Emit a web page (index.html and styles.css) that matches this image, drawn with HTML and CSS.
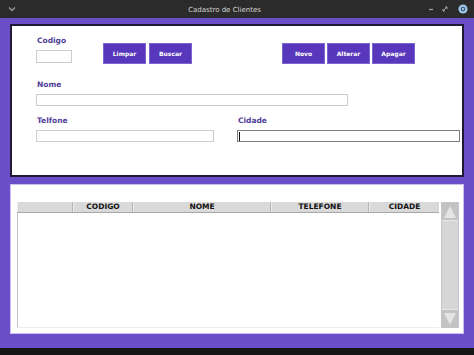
FILE: index.html
```html
<!DOCTYPE html>
<html lang="pt">
<head>
<meta charset="utf-8">
<title>Cadastro de Clientes</title>
<link rel="stylesheet" href="styles.css">
</head>
<body>
<div class="window">
  <header class="titlebar">
    <span class="tb-left">
      <svg width="8" height="6" viewBox="0 0 8 6"><path d="M1 1.5 L4 4.5 L7 1.5" fill="none" stroke="#9a9a9a" stroke-width="1.4"/></svg>
    </span>
    <span class="tb-title">Cadastro de Clientes</span>
    <span class="tb-right">
      <svg class="tb-icon" width="8" height="8" viewBox="0 0 8 8"><path d="M2 4.5 H6" stroke="#a8a8a8" stroke-width="1.2"/></svg>
      <svg class="tb-icon" width="8" height="8" viewBox="0 0 8 8"><path d="M2 6 L6 2 M4 2 H6 V4 M2 4 V6 H4" fill="none" stroke="#a8a8a8" stroke-width="1"/></svg>
      <svg class="tb-close" width="10" height="10" viewBox="0 0 10 10"><circle cx="5" cy="5" r="4.6" fill="#9fc2e8"/><circle cx="5" cy="5" r="2.2" fill="#3a4d66"/><circle cx="5" cy="5" r="1.2" fill="#9fc2e8"/></svg>
    </span>
  </header>
  <main class="content">
    <section class="form-panel">
      <div class="row-top">
        <div class="field">
          <label class="lbl">Codigo</label>
          <div class="input in-codigo"></div>
        </div>
        <div class="btn-group g1">
          <button class="btn">Limpar</button>
          <button class="btn">Buscar</button>
        </div>
        <div class="btn-group g2">
          <button class="btn">Novo</button>
          <button class="btn">Alterar</button>
          <button class="btn">Apagar</button>
        </div>
      </div>
      <div class="field field-nome">
        <label class="lbl">Nome</label>
        <div class="input in-nome"></div>
      </div>
      <div class="row-bottom">
        <div class="field">
          <label class="lbl">Telfone</label>
          <div class="input in-tel"></div>
        </div>
        <div class="field">
          <label class="lbl">Cidade</label>
          <div class="input in-cidade focused"><span class="caret"></span></div>
        </div>
      </div>
    </section>
    <section class="table-panel">
      <div class="table">
        <div class="thead">
          <div class="th"></div>
          <div class="th">CODIGO</div>
          <div class="th">NOME</div>
          <div class="th">TELEFONE</div>
          <div class="th">CIDADE</div>
        </div>
        <div class="tbody"></div>
      </div>
      <div class="scrollbar">
        <div class="sb-btn"><svg width="16" height="16" viewBox="0 0 16 16"><polygon points="8,2 14,14 2,14" fill="#e4e4e4"/></svg></div>
        <div class="sb-track"></div>
        <div class="sb-btn"><svg width="16" height="16" viewBox="0 0 16 16"><polygon points="2,2 14,2 8,14" fill="#e4e4e4"/></svg></div>
      </div>
    </section>
  </main>
  <footer class="bottom-bar"></footer>
</div>
</body>
</html>
```
FILE: styles.css
```css
* { box-sizing: border-box; }
html, body { margin: 0; padding: 0; }
body {
  width: 474px;
  height: 355px;
  overflow: hidden;
  font-family: "DejaVu Sans", sans-serif;
  background: #6a4fc8;
}
.window {
  display: flex;
  flex-direction: column;
  width: 474px;
  height: 355px;
}
.titlebar {
  height: 18px;
  background: #2b2b2b;
  display: flex;
  align-items: center;
  position: relative;
  padding: 0 6px 0 8px;
}
.tb-left { display: flex; width: 8px; }
.tb-title {
  flex: 1;
  text-align: center;
  color: #d4d4d4;
  font-size: 7px;
  padding-top: 1px;
  padding-left: 6px;
}
.tb-right {
  display: flex;
  align-items: center;
  gap: 6px;
}
.tb-close { margin-left: 3px; }
.content {
  flex: 1;
  padding: 6px 10px 14px 10px;
  display: flex;
  flex-direction: column;
  gap: 7px;
}
.form-panel {
  height: 153px;
  background: #fff;
  border: 2px solid #1e1a36;
  padding: 10px 0 0 24px;
}
.row-top { display: flex; align-items: flex-start; }
.field { display: flex; flex-direction: column; }
.lbl {
  font-size: 7.5px;
  line-height: 9px;
  font-weight: bold;
  color: #4f3e98;
  padding-left: 1px;
}
.input {
  margin-top: 5px;
  height: 12px;
  border: 1px solid #cdcdcd;
  background: #fff;
}
.in-codigo { width: 36px; height: 13px; }
.in-nome { width: 312px; }
.in-tel { width: 178px; }
.in-cidade { width: 223px; }
.focused { border-color: #7c7c7c; display: flex; align-items: center; padding-left: 1px; }
.caret { width: 1px; height: 9px; background: #111; }
.btn-group { display: flex; gap: 3px; margin-top: 7px; }
.g1 { margin-left: 31px; }
.g2 { margin-left: 90px; gap: 2px; }
.btn {
  width: 43px;
  height: 21px;
  background: #5837bd;
  border: 1px solid #7b65cf;
  color: #fff;
  font-family: "DejaVu Sans", sans-serif;
  font-weight: bold;
  font-size: 6px;
  padding: 0;
}
.field-nome { margin-top: 16px; }
.row-bottom { display: flex; gap: 23px; margin-top: 10px; }
.table-panel {
  height: 150px;
  background: #fff;
  border: 1px solid #cdbdf2;
  padding: 17px 0 0 6px;
  display: flex;
  gap: 2px;
}
.table {
  width: 422px;
  height: 126px;
  display: flex;
  flex-direction: column;
}
.thead {
  display: grid;
  grid-template-columns: 56px 60px 138px 98px 70px;
  height: 11px;
  background: #d9d9d9;
  border-bottom: 1px solid #a8a8a8;
}
.th {
  font-size: 7.5px;
  line-height: 10px;
  font-weight: bold;
  color: #111;
  text-align: center;
  border-right: 1px solid #b4b4b4;
  border-left: 1px solid #ececec;
}
.th:last-child { border-right: none; }
.tbody {
  flex: 1;
  border-left: 1px solid #c4c4c4;
  border-bottom: 1px solid #ececec;
}
.scrollbar {
  width: 18px;
  height: 126px;
  background: #d6d6d6;
  border: 1px solid #c6c6c6;
  display: flex;
  flex-direction: column;
}
.sb-btn {
  height: 17px;
  background: #c3c3c3;
  display: flex;
  align-items: center;
  justify-content: center;
}
.sb-track { flex: 1; border-top: 1px solid #e6e6e6; border-bottom: 1px solid #e6e6e6; }
.bottom-bar { height: 7px; background: #151515; }
```
